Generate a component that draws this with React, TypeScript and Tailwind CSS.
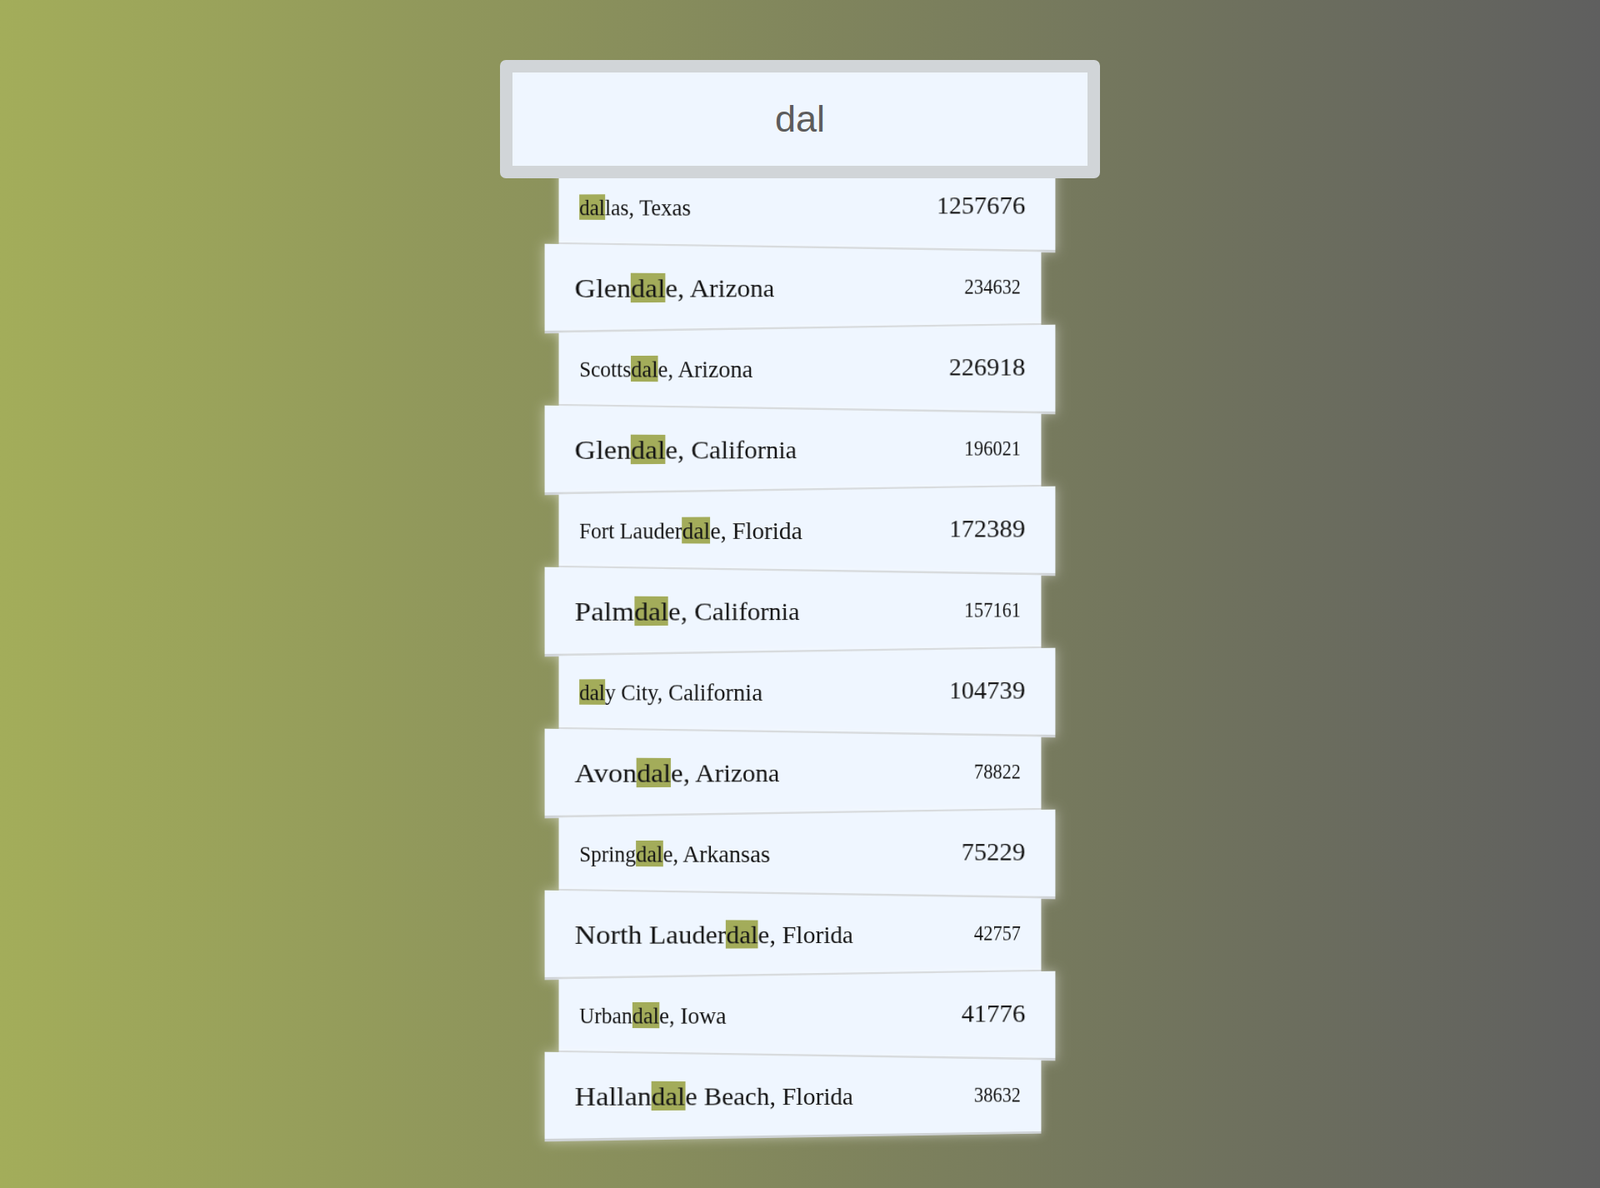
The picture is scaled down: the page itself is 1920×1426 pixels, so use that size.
type City = {
  before: string;
  match: string;
  after: string;
  population: string;
};

const cities: City[] = [
  { before: "", match: "dal", after: "las, Texas", population: "1257676" },
  { before: "Glen", match: "dal", after: "e, Arizona", population: "234632" },
  { before: "Scotts", match: "dal", after: "e, Arizona", population: "226918" },
  { before: "Glen", match: "dal", after: "e, California", population: "196021" },
  { before: "Fort Lauder", match: "dal", after: "e, Florida", population: "172389" },
  { before: "Palm", match: "dal", after: "e, California", population: "157161" },
  { before: "", match: "dal", after: "y City, California", population: "104739" },
  { before: "Avon", match: "dal", after: "e, Arizona", population: "78822" },
  { before: "Spring", match: "dal", after: "e, Arkansas", population: "75229" },
  { before: "North Lauder", match: "dal", after: "e, Florida", population: "42757" },
  { before: "Urban", match: "dal", after: "e, Iowa", population: "41776" },
  { before: "Hallan", match: "dal", after: "e Beach, Florida", population: "38632" },
];

function Suggestion({ city, index }: { city: City; index: number }) {
  // odd rows (1st, 3rd...) lean right, even rows lean left
  const odd = index % 2 === 0;
  return (
    <li
      className={
        "flex h-[97px] items-center justify-between border-b-[3px] border-[#cfd3d6] bg-[#eff6ff] px-[30px] text-[#151515] shadow-[0_0_12px_rgba(255,255,255,0.45)] " +
        (odd
          ? "[transform:translateX(-21px)_perspective(551px)_rotateY(-10.47deg)]"
          : "[transform:translateX(21px)_perspective(551px)_rotateY(10.47deg)]")
      }
    >
      <span className="text-[30px] leading-normal">
        {city.before}
        <span className="bg-[#a3ac5a]">{city.match}</span>
        {city.after}
      </span>
      <span className="text-[26.5px] leading-normal">{city.population}</span>
    </li>
  );
}

export default function App() {
  return (
    <div className="min-h-[1426px] bg-[linear-gradient(to_right,#a3ad5a,#5f5f5f)] pt-[72px] font-['Liberation_Serif','Times_New_Roman',serif]">
      <div className="mx-auto w-[600px]">
        <div className="relative z-10 -mx-[60px] flex h-[142px] items-center justify-center rounded-[7px] border-[15px] border-[#d1d5d8] bg-[#eff6ff]">
          <span className="font-['Liberation_Sans',Arial,sans-serif] text-[45px] text-[#5c5c5c]">
            dal
          </span>
        </div>
        <ul className="-mt-[13px] list-none p-0">
          {cities.map((c, i) => (
            <Suggestion key={i} city={c} index={i} />
          ))}
        </ul>
      </div>
    </div>
  );
}
